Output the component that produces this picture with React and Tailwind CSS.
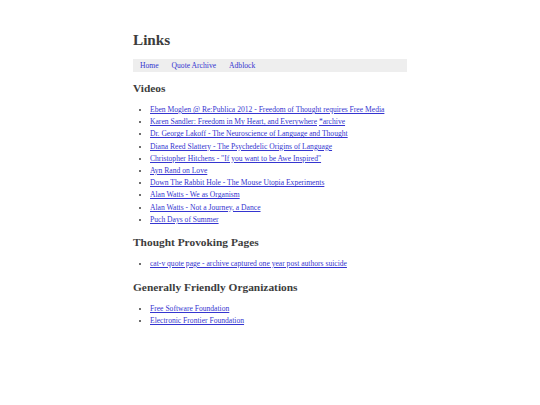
const videos = [
  "Eben Moglen @ Re:Publica 2012 - Freedom of Thought requires Free Media",
  "Karen Sandler: Freedom in My Heart, and Everywhere",
  "Dr. George Lakoff - The Neuroscience of Language and Thought",
  "Diana Reed Slattery - The Psychedelic Origins of Language",
  'Christopher Hitchens - "If you want to be Awe Inspired"',
  "Ayn Rand on Love",
  "Down The Rabbit Hole - The Mouse Utopia Experiments",
  "Alan Watts - We as Organism",
  "Alan Watts - Not a Journey, a Dance",
  "Puch Days of Summer",
];

const orgs = ["Free Software Foundation", "Electronic Frontier Foundation"];

function Item({ children }) {
  return <li className="leading-[12.2px]">{children}</li>;
}

function A({ children }) {
  return (
    <a href="#" className="text-[#3535d0] underline decoration-[#3535d0]">
      {children}
    </a>
  );
}

export default function App() {
  return (
    <div className="min-h-[405px] bg-white font-['Liberation_Serif',serif] text-[#3d3d3d]">
      <div className="mx-auto w-[274px] pt-[30px]">
        <h1 className="text-[15.2px] font-bold leading-[20px]">Links</h1>

        <nav className="mt-[9px] flex h-[13px] items-center bg-[#eeeeee] pl-[7px] text-[7.6px] leading-[13px]">
          <a href="#" className="text-[#3535d0]">Home</a>
          <a href="#" className="ml-[13px] text-[#3535d0]">Quote Archive</a>
          <a href="#" className="ml-[13px] text-[#3535d0]">Adblock</a>
        </nav>

        <h2 className="mt-[9px] text-[11.4px] font-bold leading-[14px]">Videos</h2>
        <ul className="mt-[9px] list-disc pl-[17px] text-[7.6px]">
          {videos.map((v, i) => (
            <Item key={i}>
              <A>{v}</A>
              {i === 1 && (
                <>
                  {" "}
                  <A>*archive</A>
                </>
              )}
            </Item>
          ))}
        </ul>

        <h2 className="mt-[9px] text-[11.4px] font-bold leading-[14px]">
          Thought Provoking Pages
        </h2>
        <ul className="mt-[9px] list-disc pl-[17px] text-[7.6px]">
          <Item>
            <A>cat-v quote page - archive captured one year post authors suicide</A>
          </Item>
        </ul>

        <h2 className="mt-[10px] text-[11.4px] font-bold leading-[14px]">
          Generally Friendly Organizations
        </h2>
        <ul className="mt-[9px] list-disc pl-[17px] text-[7.6px]">
          {orgs.map((o) => (
            <Item key={o}>
              <A>{o}</A>
            </Item>
          ))}
        </ul>
      </div>
    </div>
  );
}
